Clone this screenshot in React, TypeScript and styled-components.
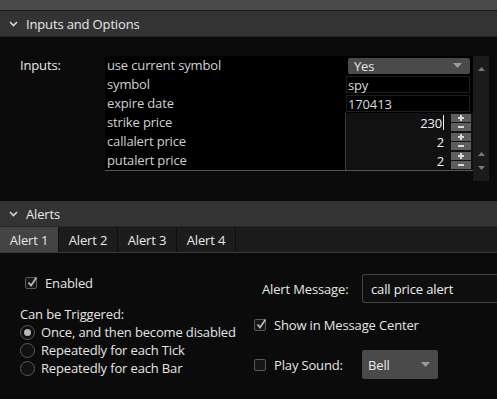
import React from 'react';
import styled, { createGlobalStyle } from 'styled-components';

const GlobalStyle = createGlobalStyle`
    html, body {
        margin: 0;
        padding: 0;
        background: #0b0b0b;
    }
    body {
        font-family: 'Open Sans', 'Liberation Sans', sans-serif;
        font-size: 13px;
        letter-spacing: -0.15px;
        color: #e6e6e6;
        overflow: hidden;
    }
`;

const Page = styled.div`
    width: 497px;
    height: 399px;
    background: #0b0b0b;
    display: flex;
    flex-direction: column;
`;

const TopStrip = styled.div`
    height: 10px;
    background: #4a4a4a;
    border-bottom: 1px solid #1a1a1a;
`;

const SectionHeader = styled.div`
    height: 25px;
    background: #333333;
    display: flex;
    align-items: center;
    padding-left: 9px;
    gap: 8px;
    color: #e8e8e8;
    font-size: 13px;
    border-bottom: 1px solid #262626;
`;

const Chevron = () => (
    <svg width='9' height='6' viewBox='0 0 9 6'>
        <path d='M1 1 L4.5 4.5 L8 1' stroke='#d8d8d8' strokeWidth='1.6' fill='none' />
    </svg>
);

const InputsArea = styled.div`
    height: 164px;
    display: flex;
    align-items: flex-start;
    padding-top: 19px;
    box-sizing: border-box;
`;

const InputsLabel = styled.div`
    width: 85px;
    padding-left: 20px;
    line-height: 19px;
    color: #e8e8e8;
`;

const InputsTable = styled.div`
    width: 368px;
    display: grid;
    grid-template-columns: 240px 128px;
    grid-auto-rows: 19px;
    border-bottom: 1px solid #555;
`;

const NameCell = styled.div`
    background: #000;
    color: #d0d0d0;
    padding-left: 2px;
    line-height: 19px;
    white-space: nowrap;
`;

const ValueCell = styled.div<{ $numeric?: boolean }>`
    background: ${p => (p.$numeric ? '#111' : '#000')};
    border-left: ${p => (p.$numeric ? '1px solid #3a3a3a' : '1px solid #000')};
    display: flex;
    align-items: center;
    padding-right: 2px;
`;

const SelectBox = styled.div<{ $width?: number; $height?: number }>`
    width: ${p => p.$width ?? 122}px;
    height: ${p => p.$height ?? 16}px;
    margin-left: 2px;
    background: #4a4a4a;
    border-radius: 2px;
    display: flex;
    align-items: center;
    justify-content: space-between;
    padding: 0 8px 0 6px;
    box-sizing: border-box;
    color: #e8e8e8;
`;

const Caret = () => (
    <svg width='9' height='5' viewBox='0 0 9 5'>
        <path d='M0 0 L9 0 L4.5 5 Z' fill='#9a9a9a' />
    </svg>
);

const TextInput = styled.div`
    width: 124px;
    height: 17px;
    background: #000;
    border: 1px solid #1e1e1e;
    color: #d8d8d8;
    line-height: 16px;
    padding-left: 1px;
    box-sizing: border-box;
`;

const NumberValue = styled.div`
    flex: 1;
    padding-right: 7px;
    color: #f0f0f0;
    display: flex;
    justify-content: flex-end;
    align-items: center;
`;

const TextCursor = styled.span`
    display: inline-block;
    width: 1px;
    height: 15px;
    background: #f0f0f0;
    margin-left: 1px;
`;

const Spinner = styled.div`
    width: 20px;
    display: flex;
    flex-direction: column;
    gap: 1px;
`;

const SpinButton = styled.div`
    height: 8px;
    background: #5e5e5e;
    display: flex;
    align-items: center;
    justify-content: center;
`;

const Plus = () => (
    <svg width='8' height='6' viewBox='0 0 8 6'>
        <path d='M1 3 H7 M4 0 V6' stroke='#d8d8d8' strokeWidth='2' />
    </svg>
);

const Minus = () => (
    <svg width='8' height='6' viewBox='0 0 8 6'>
        <path d='M1 3 H7' stroke='#d8d8d8' strokeWidth='2' />
    </svg>
);

const ScrollBar = styled.div`
    width: 16px;
    height: 125px;
    background: #1b1b1b;
    display: flex;
    flex-direction: column;
    align-items: center;
    padding: 6px 0 6px;
    box-sizing: border-box;
`;

const ScrollSpacer = styled.div`
    flex: 1;
`;

const ScrollArrow = ({ down }: { down?: boolean }) => (
    <svg width='7' height='4' viewBox='0 0 7 4' style={{ margin: '5px 0' }}>
        <path d={down ? 'M0 0 L7 0 L3.5 4 Z' : 'M0 4 L7 4 L3.5 0 Z'} fill='#7a7a7a' />
    </svg>
);

const TabBar = styled.div`
    height: 25px;
    background: #1c1c1c;
    display: flex;
    border-bottom: 1px solid #3a3a3a;
`;

const Tab = styled.div<{ $active?: boolean }>`
    width: 58px;
    background: ${p => (p.$active ? '#444444' : '#1c1c1c')};
    border-right: 1px solid #0e0e0e;
    display: flex;
    align-items: center;
    justify-content: center;
    color: #e8e8e8;
`;

const AlertBody = styled.div`
    flex: 1;
    display: flex;
    padding-top: 19px;
`;

const LeftColumn = styled.div`
    width: 234px;
    padding-left: 20px;
    display: flex;
    flex-direction: column;
`;

const RightColumn = styled.div`
    flex: 1;
    display: flex;
    flex-direction: column;
`;

const CheckRow = styled.label<{ $indent?: number }>`
    display: flex;
    align-items: center;
    gap: 8px;
    height: 22px;
    margin-left: ${p => p.$indent ?? 0}px;
`;

const Box = styled.span`
    width: 12px;
    height: 12px;
    border: 1px solid #5a5a5a;
    border-radius: 2px;
    background: #161616;
    box-sizing: border-box;
    position: relative;
    display: inline-flex;
    align-items: center;
    justify-content: center;
`;

const CheckBox = ({ checked }: { checked?: boolean }) => (
    <Box>
        {checked && (
            <svg width='12' height='12' viewBox='0 0 12 12' style={{ position: 'absolute', left: 0, top: -2 }}>
                <path d='M2.5 6.5 L5 9.5 L10.5 1.5' stroke='#b8b8b8' strokeWidth='1.8' fill='none' />
            </svg>
        )}
    </Box>
);

const GroupTitle = styled.div`
    margin-top: 11px;
    line-height: 18px;
`;

const RadioRow = styled.div`
    display: flex;
    align-items: center;
    gap: 6px;
    height: 18px;
`;

const RadioCircle = styled.span<{ $on?: boolean }>`
    width: 15px;
    height: 15px;
    border-radius: 50%;
    border: 1px solid #5a5a5a;
    background: #111;
    box-sizing: border-box;
    display: inline-flex;
    align-items: center;
    justify-content: center;
    &::after {
        content: '';
        width: 7px;
        height: 7px;
        border-radius: 50%;
        background: ${p => (p.$on ? '#b8b8b8' : 'transparent')};
    }
`;

const FieldRow = styled.div<{ $mt?: number }>`
    display: flex;
    align-items: center;
    margin-top: ${p => p.$mt ?? 0}px;
`;

const FieldLabel = styled.div<{ $width: number; $pad?: number }>`
    width: ${p => p.$width}px;
    padding-left: ${p => p.$pad ?? 0}px;
    flex-shrink: 0;
`;

const MessageInput = styled.div`
    flex: 1;
    height: 27px;
    border: 1px solid #444;
    border-right: none;
    border-radius: 3px 0 0 3px;
    background: #0e0e0e;
    display: flex;
    align-items: center;
    padding-left: 8px;
    color: #f0f0f0;
`;

const inputs = [
    { name: 'use current symbol', kind: 'select', value: 'Yes' },
    { name: 'symbol', kind: 'text', value: 'spy' },
    { name: 'expire date', kind: 'text', value: '170413' },
    { name: 'strike price', kind: 'number', value: '230', cursor: true },
    { name: 'callalert price', kind: 'number', value: '2' },
    { name: 'putalert price', kind: 'number', value: '2' },
];

const App: React.FC = () => {
    return (
        <Page>
            <GlobalStyle />
            <TopStrip />
            <SectionHeader>
                <Chevron />
                Inputs and Options
            </SectionHeader>
            <InputsArea>
                <InputsLabel>Inputs:</InputsLabel>
                <InputsTable>
                    {inputs.map(row => (
                        <React.Fragment key={row.name}>
                            <NameCell>{row.name}</NameCell>
                            <ValueCell $numeric={row.kind === 'number'}>
                                {row.kind === 'select' && (
                                    <SelectBox>
                                        {row.value}
                                        <Caret />
                                    </SelectBox>
                                )}
                                {row.kind === 'text' && <TextInput>{row.value}</TextInput>}
                                {row.kind === 'number' && (
                                    <>
                                        <NumberValue>
                                            {row.value}
                                            {row.cursor && <TextCursor />}
                                        </NumberValue>
                                        <Spinner>
                                            <SpinButton><Plus /></SpinButton>
                                            <SpinButton><Minus /></SpinButton>
                                        </Spinner>
                                    </>
                                )}
                            </ValueCell>
                        </React.Fragment>
                    ))}
                </InputsTable>
                <ScrollBar>
                    <ScrollArrow />
                    <ScrollSpacer />
                    <ScrollArrow />
                    <ScrollArrow down />
                </ScrollBar>
            </InputsArea>
            <SectionHeader>
                <Chevron />
                Alerts
            </SectionHeader>
            <TabBar>
                <Tab $active>Alert 1</Tab>
                <Tab>Alert 2</Tab>
                <Tab>Alert 3</Tab>
                <Tab>Alert 4</Tab>
            </TabBar>
            <AlertBody>
                <LeftColumn>
                    <CheckRow $indent={5}>
                        <CheckBox checked />
                        Enabled
                    </CheckRow>
                    <GroupTitle>Can be Triggered:</GroupTitle>
                    <RadioRow><RadioCircle $on />Once, and then become disabled</RadioRow>
                    <RadioRow><RadioCircle />Repeatedly for each Tick</RadioRow>
                    <RadioRow><RadioCircle />Repeatedly for each Bar</RadioRow>
                </LeftColumn>
                <RightColumn>
                    <FieldRow $mt={2}>
                        <FieldLabel $width={100} $pad={8}>Alert Message:</FieldLabel>
                        <MessageInput>call price alert</MessageInput>
                    </FieldRow>
                    <FieldRow $mt={11}>
                        <CheckRow>
                            <CheckBox checked />
                            Show in Message Center
                        </CheckRow>
                    </FieldRow>
                    <FieldRow $mt={14}>
                        <CheckRow>
                            <CheckBox />
                            <FieldLabel $width={86}>Play Sound:</FieldLabel>
                        </CheckRow>
                        <SelectBox $width={76} $height={29}>
                            Bell
                            <Caret />
                        </SelectBox>
                    </FieldRow>
                </RightColumn>
            </AlertBody>
        </Page>
    );
};

export default App;
